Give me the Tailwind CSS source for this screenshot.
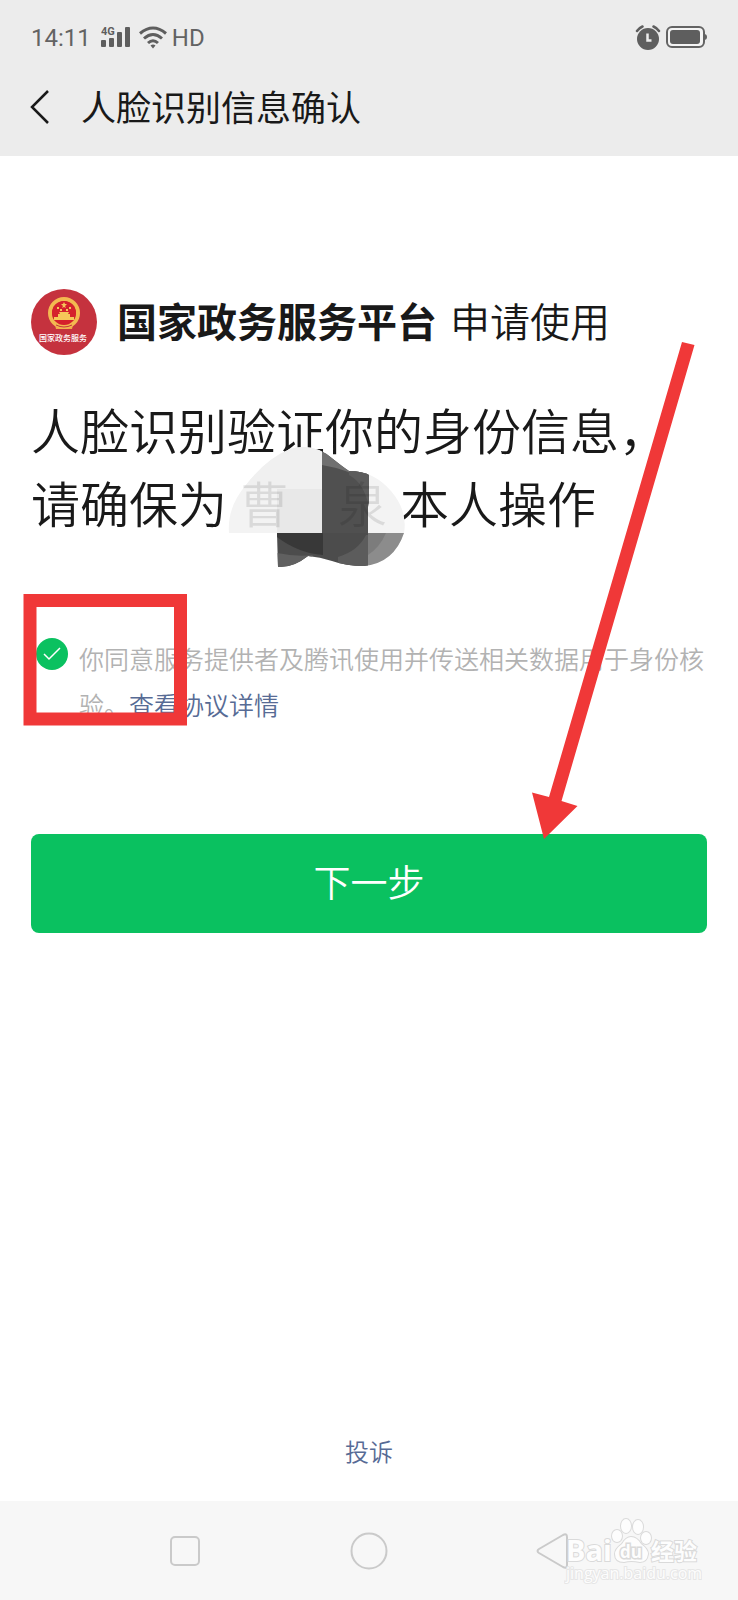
<!DOCTYPE html>
<html lang="zh-CN">
  <head>
    <meta charset="utf-8" />
    <title>人脸识别信息确认</title>
    <meta name="viewport" content="width=device-width, initial-scale=1" />
    <script src="https://cdn.jsdelivr.net/npm/@tailwindcss/browser@4"></script>
  </head>

  <body
    class="relative flex min-h-screen flex-col bg-white font-['Noto_Sans_CJK_SC',sans-serif] text-[#191919]"
  >
    <header class="bg-[#ececec]">
      <!-- status bar -->
      <div
        class="flex h-[76px] items-center px-[31px] font-[Roboto,sans-serif] text-2xl text-[#636363]"
      >
        <span>14:11</span>
        <svg class="ml-[10px] h-6 w-[30px]" viewBox="0 0 30 24" fill="#5e5e5e">
          <text x="0" y="9" font-size="11" font-weight="700">4G</text>
          <rect x="0" y="14" width="5" height="7" rx="1" />
          <rect x="8" y="12" width="5" height="9" rx="1" />
          <rect x="16" y="6" width="5" height="15" rx="1" />
          <rect x="24" y="1" width="5" height="20" rx="1" />
        </svg>
        <svg
          class="ml-2 h-6 w-[28px]"
          viewBox="0 0 28 24"
          fill="none"
          stroke="#5e5e5e"
          stroke-width="3"
        >
          <path d="M1 7.500Q14 -3.500 27 7.500" />
          <path d="M5 12.500Q14 4.500 23 12.500" />
          <path d="M9 17Q14 12.500 19 17" />
          <path d="M11.500 19.500Q14 17.500 16.500 19.500L14 22.500Z" fill="#5e5e5e" stroke="none" />
        </svg>
        <span class="ml-[5px]">HD</span>
        <svg class="ml-auto h-[26px] w-[26px]" viewBox="0 0 26 26">
          <circle cx="13" cy="14" r="11" fill="#5e5e5e" />
          <path
            d="M2 6Q4 3 7.500 1.500M24 6Q22 3 18.500 1.500"
            fill="none"
            stroke="#5e5e5e"
            stroke-width="2.500"
            stroke-linecap="round"
          />
          <path d="M12.500 8.500v7h4" fill="none" stroke="#ececec" stroke-width="2.500" />
        </svg>
        <svg class="ml-[5px] h-6 w-[41px]" viewBox="0 0 41 24">
          <rect x="1" y="1" width="37" height="20" rx="5" fill="#f4f4f4" stroke="#636363" stroke-width="2" />
          <rect x="4" y="4" width="30" height="14" rx="3" fill="#5e5e5e" />
          <path d="M38 8q3 0 3 3t-3 3z" fill="#636363" />
        </svg>
      </div>
      <!-- title bar -->
      <div class="flex h-20 items-start px-[30px] pt-[14px]">
        <button type="button" aria-label="返回">
          <svg
            class="h-[34px] w-[19px]"
            viewBox="0 0 19 34"
            fill="none"
            stroke="#191919"
            stroke-width="2.500"
          >
            <path d="M18 1L2 17l16 16" />
          </svg>
        </button>
        <h1 class="ml-8 text-[35px] leading-8 font-normal">人脸识别信息确认</h1>
      </div>
    </header>

    <main class="flex flex-1 flex-col px-[31px] pt-[133px]">
      <div class="flex items-start">
        <svg class="h-[66px] w-[66px] shrink-0" viewBox="0 0 66 66">
          <circle cx="33" cy="33" r="33" fill="#c5323e" />
          <path d="M23 32h20l-2 8H25z" fill="#f0a848" />
          <circle cx="33" cy="24" r="14" fill="none" stroke="#f3b850" stroke-width="4" />
          <circle cx="33" cy="24" r="12" fill="#d5202c" />
          <path d="M23 31v-3h4v-3h2l-1-2h10l-1 2h2v3h4v3z" fill="#f6c659" />
          <path
            d="M33 13l1 2h2l-2 2 1 2-2-1-2 1 1-2-2-2h2zM26 18h2v2h-2zM38 18h2v2h-2zM29 20h2v2h-2zM35 20h2v2h-2z"
            fill="#f6c659"
          />
          <path d="M25 36q8 4 16 0" stroke="#c5323e" fill="none" />
          <text x="32" y="52" text-anchor="middle" font-size="8" font-weight="500" fill="#fff">
            国家政务服务
          </text>
        </svg>
        <p class="ml-5 text-[40px] leading-[62px] whitespace-nowrap">
          <strong class="mr-1 font-bold">国家政务服务平台</strong>
          <span class="font-[350]">申请使用</span>
        </p>
      </div>

      <div class="relative mt-[37px] text-[49px] leading-[73px] font-[350] whitespace-nowrap">
        <p>人脸识别验证你的身份信息，</p>
        <p class="flex">
          <span>请确保为</span>
          <span class="relative z-10 mx-[13px] flex w-[147px] justify-between text-black/10">
            <span>曹</span>
            <span>泉</span>
          </span>
          <span>本人操作</span>
        </p>
        <!-- mosaic over the name -->
        <svg class="absolute top-[53px] left-[197px] h-[124px] w-[178px]" viewBox="0 0 178 124">
          <defs>
            <clipPath id="blob">
              <path
                d="M1 88Q-1 62 18 40Q38 14 62 4Q86 -3 105 14Q115 22 121 26Q146 26 163 46Q180 66 176 88Q166 118 136 121Q118 121 104 116Q92 112 80 111Q65 123 50 122L49 88Z"
              />
            </clipPath>
          </defs>
          <g clip-path="url(#blob)">
            <rect width="178" height="124" fill="#f3f3f3" />
            <rect width="94" height="44" fill="#f0f0f0" />
            <rect x="49" y="44" width="45" height="44" fill="#e8e8e8" />
            <rect x="94" width="46" height="88" fill="#505050" />
            <path d="M94 0h46v36Q118 24 94 20z" fill="#707070" />
            <path d="M121 20h20v42Q136 38 121 30z" fill="#5c5c5c" />
            <rect x="49" y="88" width="91" height="36" fill="#4c4c4c" />
            <path d="M49 88h46v22Q70 108 49 92z" fill="#383838" />
            <path d="M49 108q20 4 36 2l-12 14H49z" fill="#606060" />
            <path d="M110 112Q130 106 138 90h2v34h-30z" fill="#5c5c5c" />
            <rect x="140" y="88" width="38" height="36" fill="#8c8c8c" />
            <path d="M140 88h18Q152 102 140 110z" fill="#7c7c7c" />
          </g>
        </svg>
      </div>

      <div class="mt-[97px] flex items-start pl-[5px]">
        <span class="mt-[3px] grid shrink-0 place-items-center">
          <input
            id="agree"
            type="checkbox"
            checked
            class="col-start-1 row-start-1 h-8 w-8 appearance-none rounded-full bg-[#0ac160]"
          />
          <svg
            class="pointer-events-none col-start-1 row-start-1 h-4 w-5"
            viewBox="0 0 20 16"
            fill="none"
            stroke="#fff"
            stroke-width="1.500"
          >
            <path d="M2 8l5 5L18 2" />
          </svg>
        </span>
        <label for="agree" class="ml-[11px] text-[25px] leading-[46px] font-[350] text-[#b2b2b2]"
          >你同意服务提供者及腾讯使用并传送相关数据用于身份核验。<a
            href="#"
            class="text-[#576b95]"
            >查看协议详情</a
          ></label
        >
      </div>

      <button
        type="button"
        class="mt-[107px] h-[99px] w-full rounded-lg bg-[#0ac160] pb-1 text-[37px] font-[350] text-white"
      >
        下一步
      </button>

      <a href="#" class="mt-auto mb-8 self-center text-2xl leading-9 font-[350] text-[#576b95]">投诉</a>
    </main>

    <!-- system navigation -->
    <nav class="grid h-[99px] grid-cols-3 place-items-center bg-[#f7f7f7] px-[12.5%]">
      <button type="button" aria-label="最近任务">
        <svg class="h-9 w-9" viewBox="0 0 36 36" fill="none" stroke="#cacaca" stroke-width="2">
          <rect x="4" y="4" width="28" height="28" rx="4" />
        </svg>
      </button>
      <button type="button" aria-label="主页">
        <svg class="h-[38px] w-[38px]" viewBox="0 0 38 38" fill="none" stroke="#cacaca" stroke-width="2">
          <circle cx="19" cy="19" r="17.500" />
        </svg>
      </button>
      <button type="button" aria-label="返回">
        <svg
          class="h-9 w-9"
          viewBox="0 0 36 36"
          fill="none"
          stroke="#cacaca"
          stroke-width="2"
          stroke-linejoin="round"
        >
          <path d="M3 16L27 2Q31 0 31 4V32Q31 36 27 34L3 20Q0 18 3 16Z" />
        </svg>
      </button>
    </nav>

    <!-- watermark -->
    <svg
      class="pointer-events-none absolute right-9 bottom-4 h-[72px] w-[138px]"
      viewBox="0 0 138 72"
      fill="#fdfdfd"
      stroke="#dadada"
      stroke-width="2"
      paint-order="stroke"
      font-family="Open Sans"
    >
      <text x="2" y="49" font-size="29" font-weight="700">Bai</text>
      <ellipse cx="53" cy="24" rx="5" ry="6" />
      <ellipse cx="62" cy="14" rx="5" ry="7" />
      <ellipse cx="74" cy="15" rx="5" ry="7" />
      <ellipse cx="82" cy="26" rx="5" ry="6" />
      <path d="M67 25Q73 25 77 32Q84 37 84 42Q83 50 76 50Q67 48 60 50Q51 50 51 42Q51 37 58 32Q62 25 67 25Z" />
      <text x="67" y="46" font-size="17" text-anchor="middle" stroke-width="3" font-weight="700">du</text>
      <text x="87" y="48" font-size="23" font-weight="700" font-family="Noto Sans CJK SC">经验</text>
      <text x="2" y="67" font-size="16" stroke="#e6e6e6">jingyan.baidu.com</text>
    </svg>

    <!-- highlight box and arrow -->
    <svg
      class="pointer-events-none absolute top-0 left-0 z-20 h-[860px] w-[738px]"
      viewBox="0 0 738 860"
      fill="#f03838"
    >
      <rect x="30" y="600.500" width="150.500" height="118.500" fill="none" stroke="#f03838" stroke-width="13" />
      <path d="M682 342L694.500 345L561.500 801L577.500 806L544 839L532 792.500L549 797Z" />
    </svg>
  </body>
</html>
